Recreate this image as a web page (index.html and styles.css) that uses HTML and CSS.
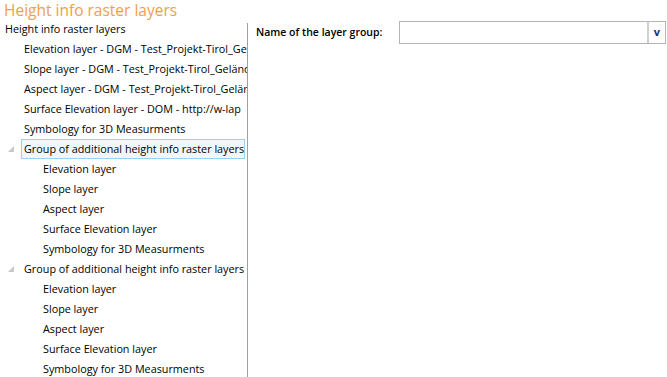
FILE: index.html
```html
<!DOCTYPE html>
<html>
<head>
<meta charset="utf-8">
<link rel="stylesheet" href="styles.css">
</head>
<body>
<div class="title">Height info raster layers</div>
<div class="main">
  <div class="tree">
    <div class="row root">Height info raster layers</div>
    <div class="row l1">Elevation layer - DGM - Test_Projekt-Tirol_GelämdeDGM</div>
    <div class="row l1">Slope layer - DGM - Test_Projekt-Tirol_Gelände</div>
    <div class="row l1">Aspect layer - DGM - Test_Projekt-Tirol_Gelände</div>
    <div class="row l1">Surface Elevation layer - DOM - http://w-lap</div>
    <div class="row l1">Symbology for 3D Measurments</div>
    <div class="row l1 group"><span class="tri"></span><span class="sel">Group of additional height info raster layers</span></div>
    <div class="row l2">Elevation layer</div>
    <div class="row l2">Slope layer</div>
    <div class="row l2">Aspect layer</div>
    <div class="row l2">Surface Elevation layer</div>
    <div class="row l2">Symbology for 3D Measurments</div>
    <div class="row l1 group"><span class="tri"></span><span class="lbl">Group of additional height info raster layers</span></div>
    <div class="row l2">Elevation layer</div>
    <div class="row l2">Slope layer</div>
    <div class="row l2">Aspect layer</div>
    <div class="row l2">Surface Elevation layer</div>
    <div class="row l2">Symbology for 3D Measurments</div>
  </div>
  <div class="form">
    <div class="field">
      <span class="label">Name of the layer group:</span>
      <div class="combo"><div class="input"></div><div class="btn">v</div></div>
    </div>
  </div>
</div>
</body>
</html>
```
FILE: styles.css
```css
html, body { margin: 0; padding: 0; background: #fff; }
body { font-family: "Open Sans", "Noto Sans", sans-serif; font-size: 10.8px; color: #000; width: 667px; height: 377px; overflow: hidden; }
.title { height: 19px; line-height: 20px; font-size: 15.5px; color: #f0a048; padding-left: 4px; }
.main { display: flex; height: 358px; }
.tree { width: 247px; overflow: hidden; }
.tree .row { height: 20px; line-height: 20px; white-space: nowrap; overflow: hidden; position: relative; }
.root { padding-left: 5px; }
.l1 { padding-left: 24px; }
.l2 { padding-left: 43px; }
.group { padding-left: 21px; }
.tri { position: absolute; left: 8px; top: 7px; width: 0; height: 0; border-left: 6px solid transparent; border-bottom: 6px solid #c8c8c8; }
.sel { display: inline-block; height: 18px; line-height: 18px; border: 1px solid #99d1f0; background: #eef7fd; padding: 0 2px; width: 218px; }
.lbl { padding-left: 3px; }
.form { flex: 1; padding-left: 8px; margin-top: 4px; border-left: 1px solid #a0a0a0; }
.field { display: flex; align-items: center; height: 24px; margin-top: -3px; }
.label { width: 143px; font-weight: 600; font-size: 10.5px; }
.combo { display: flex; border: 1px solid #b4b4b4; height: 21px; width: 265px; }
.input { flex: 1; }
.btn { width: 16px; border-left: 2px solid #d0d0d0; font-weight: bold; color: #1a2a80; text-align: center; line-height: 19px; font-size: 11px; }
```
